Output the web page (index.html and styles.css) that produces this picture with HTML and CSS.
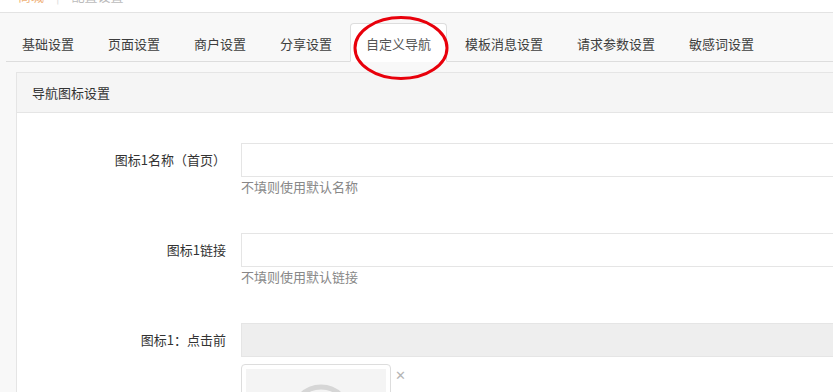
FILE: index.html
```html
<!DOCTYPE html>
<html lang="zh-CN">
<head>
    <meta charset="UTF-8">
    <title>系统设置</title>
    <link rel="stylesheet" href="styles.css">
</head>
<body>
    <div class="topbar">
        <div class="crumbs"><span class="home">商城</span><span class="sep">|</span>配置设置</div>
    </div>

    <div class="page">
        <ul class="tabs">
            <li>基础设置</li>
            <li>页面设置</li>
            <li>商户设置</li>
            <li>分享设置</li>
            <li class="active">自定义导航
                <svg class="mark" width="98" height="66" viewBox="0 0 98 66">
                    <ellipse cx="49" cy="33" rx="46" ry="30.5" fill="none" stroke="#e8000b" stroke-width="3"/>
                </svg>
            </li>
            <li>模板消息设置</li>
            <li>请求参数设置</li>
            <li>敏感词设置</li>
        </ul>

        <div class="panel">
            <div class="panel-heading">导航图标设置</div>
            <div class="panel-body">
                <div class="form-row">
                    <label>图标1名称（首页）</label>
                    <div class="field">
                        <input type="text">
                        <div class="help">不填则使用默认名称</div>
                    </div>
                </div>
                <div class="form-row">
                    <label>图标1链接</label>
                    <div class="field">
                        <input type="text">
                        <div class="help">不填则使用默认链接</div>
                    </div>
                </div>
                <div class="form-row">
                    <label>图标1：点击前</label>
                    <div class="field">
                        <input type="text" class="readonly" readonly>
                        <div class="thumb-row">
                            <div class="thumb">
                                <div class="thumb-inner">
                                    <svg width="140" height="60" viewBox="0 0 140 60">
                                        <circle cx="75" cy="46" r="28" fill="none" stroke="#d6d6d6" stroke-width="5"/>
                                    </svg>
                                </div>
                            </div>
                            <span class="remove">&#x2715;</span>
                        </div>
                    </div>
                </div>
            </div>
        </div>
    </div>
</body>
</html>
```

FILE: styles.css
```css
/* Page */
body {
    margin: 0;
    background-color: #f8f8f8;
    font-family: "Noto Sans CJK SC", "Liberation Sans", sans-serif;
    font-size: 13px;
    color: #333;
    overflow: hidden;
}

/* Top breadcrumb strip, scrolled mostly out of view */
.topbar {
    height: 12px;
    background-color: #fff;
    border-bottom: 1px solid #e3e3e3;
    overflow: hidden;
}

.crumbs {
    margin-top: -13px;
    padding-left: 18px;
    line-height: 18px;
    color: #bbb;
}

.crumbs .home {
    color: #f0b27a;
}

.crumbs .sep {
    margin: 0 12px;
    color: #ddd;
}

.page {
    padding: 10px 0 0 6px;
}

/* Tabs */
.tabs {
    display: flex;
    list-style: none;
    margin: 0;
    padding: 0;
    border-bottom: 1px solid #dddddd;
}

.tabs li {
    position: relative;
    margin-right: 2px;
    margin-bottom: -1px;
    padding: 0 15px;
    height: 37px;
    line-height: 39px;
    border: 1px solid transparent;
    border-radius: 4px 4px 0 0;
    color: #3d3d3d;
    white-space: nowrap;
}

.tabs li.active {
    background-color: #fff;
    border-color: #dddddd;
    border-bottom-color: #fff;
    color: #555;
}

/* Red annotation ring around the active tab */
.tabs .mark {
    position: absolute;
    left: 1px;
    top: -9px;
    overflow: visible;
}

/* Panel */
.panel {
    margin: 10px -40px 0 10px;
    background-color: #fff;
    border: 1px solid #e5e5e5;
}

.panel-heading {
    height: 39px;
    line-height: 39px;
    padding-left: 15px;
    background-color: #f5f5f5;
    border-bottom: 1px solid #e5e5e5;
    color: #333;
}

.panel-body {
    padding-top: 30px;
}

.form-row {
    display: flex;
    margin-bottom: 37px;
}

.form-row label {
    width: 209px;
    padding-right: 15px;
    text-align: right;
    line-height: 34px;
    flex-shrink: 0;
}

.field {
    flex: 1;
}

.field input {
    display: block;
    box-sizing: border-box;
    width: 100%;
    height: 34px;
    margin: 0;
    border: 1px solid #e5e5e5;
    background-color: #fff;
    outline: none;
}

.field input.readonly {
    background-color: #eeeeee;
}

.help {
    margin-top: 1px;
    line-height: 18px;
    color: #888;
}

/* Image preview */
.thumb-row {
    display: flex;
    margin-top: 7px;
}

.thumb {
    width: 140px;
    height: 60px;
    padding: 4px;
    border: 1px solid #dddddd;
    border-radius: 4px;
    background-color: #fff;
}

.thumb-inner {
    height: 100%;
    background-color: #f4f4f4;
}

.thumb-inner svg {
    display: block;
}

.remove {
    margin: 3px 0 0 4px;
    color: #b5b5b5;
    font-size: 13px;
    line-height: 16px;
}
```
